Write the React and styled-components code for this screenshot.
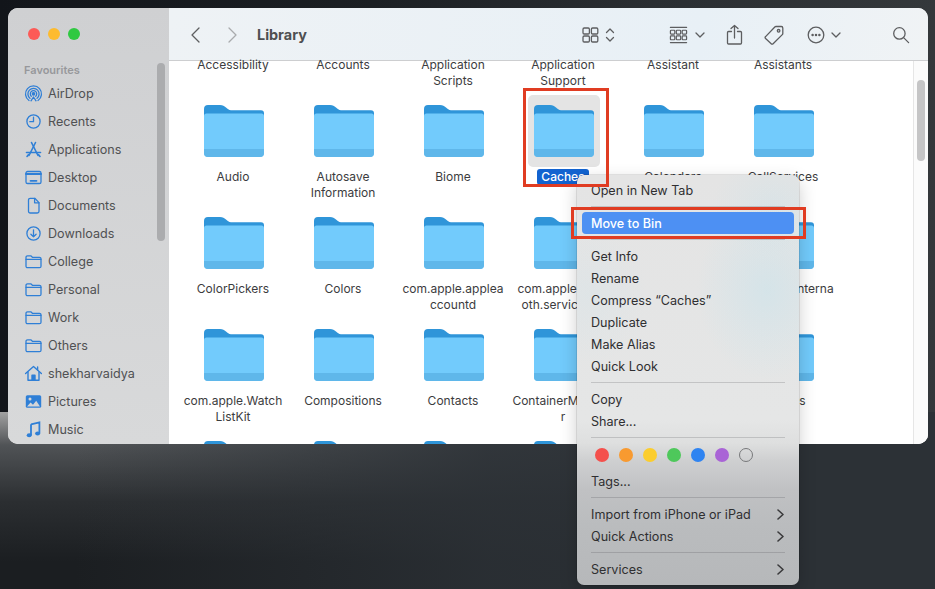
import React from "react";
import styled, { createGlobalStyle } from "styled-components";

const Global = createGlobalStyle`
  html, body { margin: 0; padding: 0; width: 935px; height: 589px; overflow: hidden; background: #1b1e21; }
  * { box-sizing: border-box; }
`;

const Desktop = styled.div`
  position: relative;
  width: 935px;
  height: 589px;
  padding: 8px 7px 145px 8px;
  overflow: hidden;
  font-family: Inter, "Liberation Sans", sans-serif;
  background:
    linear-gradient(90deg, rgba(44, 49, 54, 0) 8%, rgba(44, 49, 54, .85) 52%, #2c3136 86%) left bottom / 100% 177px no-repeat,
    linear-gradient(180deg, #a2a2a2 0, #505356 33px, #2b2e31 90px, #1b1e21 150px) left bottom / 100% 177px no-repeat,
    linear-gradient(90deg, #12151a 0, #1c2024 40%, #2a2e32 70%, #34383b 100%);
`;

const Window = styled.div`
  display: flex;
  width: 920px;
  height: 436px;
  border-radius: 10px;
  overflow: hidden;
  background: #fff;
`;

const Sidebar = styled.aside`
  position: relative;
  flex: 0 0 161px;
  display: flex;
  flex-direction: column;
  padding: 20px 0 0 0;
  background: linear-gradient(180deg, #cfd0d2, #d8d9da);
`;

const Lights = styled.div`
  display: flex;
  gap: 8px;
  padding-left: 20px;
  height: 12px;
`;

const Light = styled.span`
  width: 12px;
  height: 12px;
  border-radius: 50%;
  background: ${(p) => p.$c};
`;

const SideTitle = styled.div`
  margin: 21px 0 0 16px;
  height: 18px;
  font-size: 11px;
  line-height: 18px;
  font-weight: 600;
  color: #97989b;
`;

const SideItem = styled.div`
  display: flex;
  align-items: center;
  height: 28px;
  padding-left: 16px;
  gap: 5px;
  font-size: 12.6px;
  color: #505153;
  white-space: nowrap;
  flex: 0 0 28px;
  svg { flex: 0 0 19px; width: 19px; height: 19px; }
`;

const SideThumb = styled.div`
  position: absolute;
  left: 149px;
  top: 55px;
  width: 8px;
  height: 178px;
  border-radius: 4px;
  background: #abacae;
`;

const Main = styled.main`
  position: relative;
  flex: 1;
  display: flex;
  flex-direction: column;
  min-width: 0;
`;

const Toolbar = styled.header`
  flex: 0 0 53px;
  display: flex;
  align-items: center;
  padding: 1px 0 0 20px;
  color: #5d5e60;
  background: linear-gradient(100deg, #eef2f5, #e8f0f6 70%, #f0f3f5);
  border-bottom: 1px solid #cdced0;
  svg { display: block; fill: none; stroke: currentColor; stroke-width: 1.3; stroke-linecap: round; stroke-linejoin: round; }
`;

const Tool = styled.span`
  display: block;
  margin-left: ${(p) => p.$ml || 0}px;
  color: ${(p) => p.$c || "inherit"};
`;

const Title = styled.h1`
  margin: 0 0 0 18px;
  width: 325px;
  font-size: 14.4px;
  font-weight: 700;
  color: #4e4f51;
`;

const Content = styled.div`
  flex: 1;
  display: flex;
  min-height: 0;
  background: #fff;
`;

const Viewport = styled.div`
  flex: 1;
  min-width: 0;
  margin-top: -4px;
  overflow: hidden;
  padding-left: 9px;
`;

const Grid = styled.div`
  display: grid;
  grid-template-columns: repeat(6, 110px);
  grid-auto-rows: 112px;
  margin-top: -74px;
`;

const Cell = styled.div`
  display: flex;
  flex-direction: column;
  align-items: center;
`;

const FolderBox = styled.div`
  display: flex;
  align-items: center;
  justify-content: center;
  flex: 0 0 72px;
  width: 72px;
  height: 72px;
  margin: 0 -1px 0 1px;
  border-radius: 5px;
  background: ${(p) => (p.$sel ? "#e4e4e4" : "transparent")};
  svg { width: 60px; height: 52px; display: block; }
`;

const Label = styled.div`
  margin-top: 2px;
  width: 108px;
  text-align: center;
  font-size: 12px;
  line-height: 16px;
  color: #3c3c3e;
  white-space: nowrap;
`;

const SelLabel = styled.span`
  display: inline-block;
  padding: 0 4px;
  border-radius: 3px;
  background: #1263d0;
  color: #fff;
  font-weight: 500;
`;

const ScrollTrack = styled.div`
  flex: 0 0 15px;
  display: flex;
  justify-content: center;
  padding-top: 19px;
  background: #fbfbfb;
  border-left: 1px solid #e6e6e6;
`;

const ScrollThumb = styled.div`
  width: 8px;
  height: 81px;
  border-radius: 4px;
  background: #c5c5c6;
`;

const Menu = styled.div`
  position: absolute;
  left: 577px;
  top: 175px;
  width: 222px;
  height: 410px;
  padding: 4px 5px;
  border-radius: 7px;
  background:
    radial-gradient(70px 90px at 190px 115px, rgba(190, 226, 238, .4), transparent),
    radial-gradient(60px 70px at 10px 120px, rgba(200, 226, 236, .2), transparent),
    radial-gradient(60px 50px at 195px 30px, rgba(195, 225, 235, .3), transparent),
    linear-gradient(180deg, #e4e4e4 0, #e5e6e6 245px, #dedfdf 268px, #cfd0d1 285px, #c0c1c3 315px, #babcbe 350px, #b6b8ba 100%);
  box-shadow: 0 0 0 0.5px rgba(0,0,0,.18), 0 6px 18px rgba(0,0,0,.2);
  font-size: 12.6px;
  color: #2f2f31;
`;

const Item = styled.div`
  display: flex;
  align-items: center;
  justify-content: space-between;
  height: 22px;
  padding: 0 9px;
  border-radius: 4px;
  background: ${(p) => (p.$active ? "#4d90f3" : "transparent")};
  color: ${(p) => (p.$active ? "#fff" : "inherit")};
  font-weight: ${(p) => (p.$active ? 500 : 400)};
  svg { width: 9px; height: 11px; fill: none; stroke: #3a3a3c; stroke-width: 1.6; stroke-linecap: round; stroke-linejoin: round; }
`;

const Sep = styled.div`
  height: 1px;
  margin: 5px 9px;
  background: rgba(60,60,65,.2);
`;

const Dots = styled.div`
  display: flex;
  align-items: center;
  gap: 10px;
  height: 27px;
  padding: 0 13px 3px;
`;

const Dot = styled.span`
  width: 14px;
  height: 14px;
  border-radius: 50%;
  background: ${(p) => p.$c};
  ${(p) => p.$hollow && "border: 1px solid #77787a;"}
`;

const RedBox = styled.div`
  position: absolute;
  left: ${(p) => p.$x}px;
  top: ${(p) => p.$y}px;
  width: ${(p) => p.$w}px;
  height: ${(p) => p.$h}px;
  border: 3px solid #e03c22;
  pointer-events: none;
`;

const Folder = () => (
  <svg viewBox="0 0 60 52">
    <path d="M0 4a4 4 0 0 1 4-4h12c3 0 4 1 6 2.6 1.6 1.3 2.8 2.6 5 2.6h30a3 3 0 0 1 3 3V20H0z" fill="#2f95d9" />
    <path d="M0 11a2.5 2.5 0 0 1 2.5-2.5h55a2.5 2.5 0 0 1 2.5 2.5V48a4 4 0 0 1-4 4H4a4 4 0 0 1-4-4z" fill="#72cbfc" />
    <path d="M0 44h60v4a4 4 0 0 1-4 4H4a4 4 0 0 1-4-4z" fill="#5fb7ea" />
  </svg>
);

const B = { fill: "none", stroke: "#2f7fd6", strokeWidth: 1.3, strokeLinecap: "round", strokeLinejoin: "round" };

const icons = {
  airdrop: (
    <svg viewBox="0 0 19 19" {...B}>
      <path d="M5 16.5A8 8 0 1 1 14 16.5" /><path d="M6 14.3A5.6 5.6 0 1 1 13 14.3" /><path d="M7.3 12.2a3.2 3.2 0 1 1 4.4 0" />
      <circle cx="9.5" cy="9.8" r="1.2" fill="#2f7fd6" /><path d="M7 16.8 9.5 13l2.5 3.8" />
    </svg>
  ),
  recents: (
    <svg viewBox="0 0 19 19" {...B}><circle cx="9.5" cy="9.5" r="6.6" /><path d="M9.5 5.2v4.5H5.8" /></svg>
  ),
  apps: (
    <svg viewBox="0 0 19 19" {...B} strokeWidth="1.6"><path d="M11.5 2.5 5 15.5" /><path d="M7.5 2.5l6.5 13" /><path d="M2.5 12.5h14" /><path d="M3 16.5l1.6-2M16 16.5l-1.6-2" /></svg>
  ),
  desktop: (
    <svg viewBox="0 0 19 19" {...B}><rect x="2" y="3.5" width="15" height="12" rx="1.6" /><path d="M2 6h15" strokeWidth="2" /><path d="M6.5 12.8h6" strokeWidth="1.8" /></svg>
  ),
  doc: (
    <svg viewBox="0 0 19 19" {...B}><path d="M4.5 4A1.7 1.7 0 0 1 6.2 2.3h4.6L15 6.6v8.7a1.7 1.7 0 0 1-1.7 1.7H6.2a1.7 1.7 0 0 1-1.7-1.7z" /><path d="M10.6 2.5v4.3H15" /></svg>
  ),
  down: (
    <svg viewBox="0 0 19 19" {...B}><circle cx="9.5" cy="9.5" r="6.6" /><path d="M9.5 5.8v7M6.9 10.3l2.6 2.6 2.6-2.6" /></svg>
  ),
  folder: (
    <svg viewBox="0 0 19 19" {...B}><path d="M2 5.3A1.5 1.5 0 0 1 3.5 3.8h3.3l1.6 1.5h7.1A1.5 1.5 0 0 1 17 6.8v7.4a1.5 1.5 0 0 1-1.5 1.5h-12A1.5 1.5 0 0 1 2 14.2z" /><path d="M2 7.3h15" /></svg>
  ),
  home: (
    <svg viewBox="0 0 19 19" {...B} strokeWidth="1.4"><path d="M1.6 9.6 9.5 2.6l7.9 7" /><path d="M4 8v8.2h11V8" /><path d="M13.6 3v3" /><rect x="8" y="11.2" width="3" height="5" fill="#2f7fd6" /></svg>
  ),
  pics: (
    <svg viewBox="0 0 19 19"><rect x="1.8" y="3.2" width="15.4" height="12.6" rx="1.6" fill="#2f7fd6" /><circle cx="6" cy="7" r="1.5" fill="#d4d5d7" /><path d="M3 14.6l3.6-4.1 2.4 2.2 3.2-3.9 3.8 5.8z" fill="#d4d5d7" /></svg>
  ),
  music: (
    <svg viewBox="0 0 19 19"><path d="M7 4.3 15.4 2.4v11" fill="none" stroke="#2f7fd6" strokeWidth="1.8" /><path d="M7 4.3V15" fill="none" stroke="#2f7fd6" strokeWidth="1.8" /><ellipse cx="5.2" cy="15.2" rx="2.5" ry="2" fill="#2f7fd6" /><ellipse cx="13.6" cy="13.6" rx="2.5" ry="2" fill="#2f7fd6" /></svg>
  ),
};

const sideItems = [
  ["AirDrop", "airdrop"], ["Recents", "recents"], ["Applications", "apps"], ["Desktop", "desktop"],
  ["Documents", "doc"], ["Downloads", "down"], ["College", "folder"], ["Personal", "folder"],
  ["Work", "folder"], ["Others", "folder"], ["shekharvaidya", "home"], ["Pictures", "pics"], ["Music", "music"],
];

const rows = [
  [["Accessibility"], ["Accounts"], ["Application", "Scripts"], ["Application", "Support"], ["Assistant"], ["Assistants"]],
  [["Audio"], ["Autosave", "Information"], ["Biome"], null, ["Calendars"], ["CallServices"]],
  [["ColorPickers"], ["Colors"], ["com.apple.applea", "ccountd"], ["com.apple.bluet", "oth.services.cl"], [], ["ContainersInterna"]],
  [["com.apple.Watch", "ListKit"], ["Compositions"], ["Contacts"], ["ContainerManage", "r"], [], ["Devices"]],
  [[], [], [], [], [], []],
];

const SmallChev = () => (
  <svg width="10" height="6" viewBox="0 0 10 6" strokeWidth="1.6"><path d="M1 1l4 4 4-4" /></svg>
);

const Chevron = () => (
  <svg viewBox="0 0 9 11"><path d="M2 1l5 4.5L2 10" /></svg>
);

export default function App() {
  return (
    <Desktop>
      <Global />
      <Window>
        <Sidebar>
          <Lights>
            <Light $c="#fc5b57" /><Light $c="#fdbb2f" /><Light $c="#2fc941" />
          </Lights>
          <SideTitle>Favourites</SideTitle>
          {sideItems.map(([n, ic]) => (
            <SideItem key={n}>{icons[ic]}{n}</SideItem>
          ))}
          <SideThumb />
        </Sidebar>
        <Main>
          <Toolbar>
            <Tool>
              <svg width="14" height="18" viewBox="0 0 14 18" strokeWidth="1.7"><path d="M10 2 3 9l7 7" /></svg>
            </Tool>
            <Tool $ml={22} $c="#a9abad">
              <svg width="14" height="18" viewBox="0 0 14 18" strokeWidth="1.7"><path d="M4 2l7 7-7 7" /></svg>
            </Tool>
            <Title>Library</Title>
            <Tool>
              <svg width="17" height="16" viewBox="0 0 17 16">
                <rect x="1" y="1" width="6.4" height="6" rx="1.2" /><rect x="9.4" y="1" width="6.4" height="6" rx="1.2" />
                <rect x="1" y="9" width="6.4" height="6" rx="1.2" /><rect x="9.4" y="9" width="6.4" height="6" rx="1.2" />
              </svg>
            </Tool>
            <Tool $ml={6}>
              <svg width="10" height="16" viewBox="0 0 10 16" strokeWidth="1.6"><path d="M1.5 5.5 5 2l3.5 3.5M1.5 10.5 5 14l3.5-3.5" /></svg>
            </Tool>
            <Tool $ml={54}>
              <svg width="19" height="20" viewBox="0 0 20 20" strokeWidth="1">
                <path d="M1.5 2h17M1.5 18h17" />
                <rect x="1.5" y="5" width="4.6" height="4" rx=".8" /><rect x="7.7" y="5" width="4.6" height="4" rx=".8" /><rect x="13.9" y="5" width="4.6" height="4" rx=".8" />
                <rect x="1.5" y="11" width="4.6" height="4" rx=".8" /><rect x="7.7" y="11" width="4.6" height="4" rx=".8" /><rect x="13.9" y="11" width="4.6" height="4" rx=".8" />
              </svg>
            </Tool>
            <Tool $ml={7}><SmallChev /></Tool>
            <Tool $ml={21}>
              <svg width="17" height="21" viewBox="0 0 17 21">
                <path d="M8.5 14V1.5M5 4.6l3.5-3.2L12 4.6" /><path d="M5.5 7.5h-3a1 1 0 0 0-1 1V19a1 1 0 0 0 1 1h12a1 1 0 0 0 1-1V8.5a1 1 0 0 0-1-1h-3" />
              </svg>
            </Tool>
            <Tool $ml={21}>
              <svg width="21" height="21" viewBox="0 0 21 21">
                <path d="M1.6 12.6 10.8 3a1.6 1.6 0 0 1 1.2-.5h5.3a1.5 1.5 0 0 1 1.5 1.5v5.4a1.6 1.6 0 0 1-.5 1.2l-9.2 9.1a1.3 1.3 0 0 1-1.9 0l-5.6-5.2a1.5 1.5 0 0 1 0-2.1z" />
                <circle cx="14.6" cy="6.8" r="1.3" />
              </svg>
            </Tool>
            <Tool $ml={22}>
              <svg width="18" height="18" viewBox="0 0 18 18">
                <circle cx="9" cy="9" r="7.8" /><circle cx="5.6" cy="9" r=".6" fill="currentColor" /><circle cx="9" cy="9" r=".6" fill="currentColor" /><circle cx="12.4" cy="9" r=".6" fill="currentColor" />
              </svg>
            </Tool>
            <Tool $ml={6}><SmallChev /></Tool>
            <Tool $ml={51}>
              <svg width="18" height="18" viewBox="0 0 18 18" strokeWidth="1.4"><circle cx="7.4" cy="7.4" r="5.7" /><path d="M11.6 11.6 16.6 16.6" /></svg>
            </Tool>
          </Toolbar>
          <Content>
            <Viewport>
              <Grid>
                {rows.flatMap((row, r) =>
                  row.map((lines, c) => (
                    <Cell key={`${r}-${c}`}>
                      <FolderBox $sel={lines === null}><Folder /></FolderBox>
                      <Label>
                        {lines === null
                          ? <SelLabel>Caches</SelLabel>
                          : lines.map((l) => <div key={l}>{l}</div>)}
                      </Label>
                    </Cell>
                  ))
                )}
              </Grid>
            </Viewport>
            <ScrollTrack><ScrollThumb /></ScrollTrack>
          </Content>
        </Main>
      </Window>

      <Menu>
        <Item>Open in New Tab</Item>
        <Sep />
        <Item $active>Move to Bin</Item>
        <Sep />
        <Item>Get Info</Item>
        <Item>Rename</Item>
        <Item>Compress “Caches”</Item>
        <Item>Duplicate</Item>
        <Item>Make Alias</Item>
        <Item>Quick Look</Item>
        <Sep />
        <Item>Copy</Item>
        <Item>Share...</Item>
        <Sep />
        <Dots>
          <Dot $c="#f4504c" /><Dot $c="#f89a30" /><Dot $c="#fbcd2d" /><Dot $c="#4ec85b" /><Dot $c="#2f84f1" /><Dot $c="#a964d6" /><Dot $hollow $c="transparent" />
        </Dots>
        <Item>Tags...</Item>
        <Sep />
        <Item>Import from iPhone or iPad<Chevron /></Item>
        <Item>Quick Actions<Chevron /></Item>
        <Sep />
        <Item>Services<Chevron /></Item>
      </Menu>

      <RedBox $x={523} $y={88} $w={86} $h={99} />
      <RedBox $x={571} $y={207} $w={235} $h={32} />
    </Desktop>
  );
}
